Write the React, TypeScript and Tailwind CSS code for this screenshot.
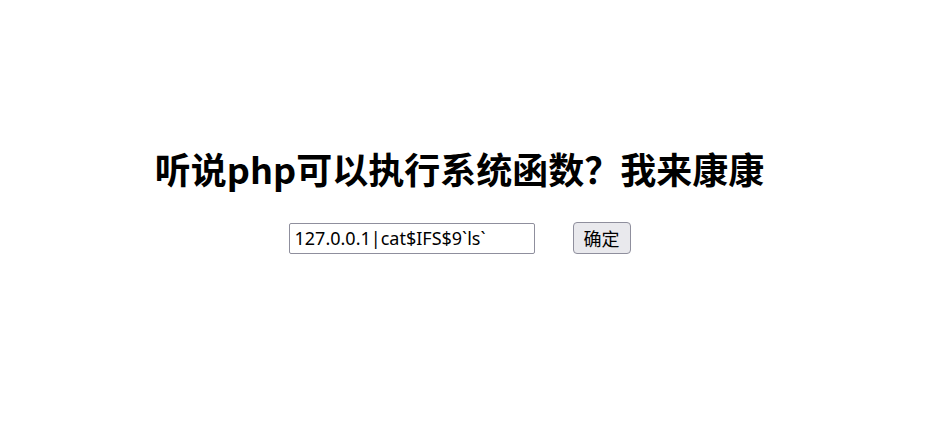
export default function App() {
  return (
    <div className="w-[931px] h-[432px] bg-white flex flex-col items-center pr-[12px] font-['Noto_Sans','Noto_Sans_CJK_SC',sans-serif]">
      <h1 className="mt-[144px] text-[36px] leading-[48px] font-bold text-black font-['Noto_Sans_CJK_SC',sans-serif]">
        听说php可以执行系统函数？我来康康
      </h1>
      <form className="mt-[30px] flex items-center gap-[38px]" onSubmit={(e) => e.preventDefault()}>
        <input
          type="text"
          defaultValue="127.0.0.1|cat$IFS$9`ls`"
          className="w-[246px] h-[31px] border border-[#8f8f9d] rounded-[2px] px-[5px] text-[18px] text-black outline-none font-['Noto_Sans',sans-serif]"
        />
        <button className="h-[32px] px-[10px] bg-[#e9e9ed] border border-[#8f8f9d] rounded-[4px] text-[18px] text-black font-['Noto_Sans_CJK_SC',sans-serif]">
          确定
        </button>
      </form>
    </div>
  );
}
